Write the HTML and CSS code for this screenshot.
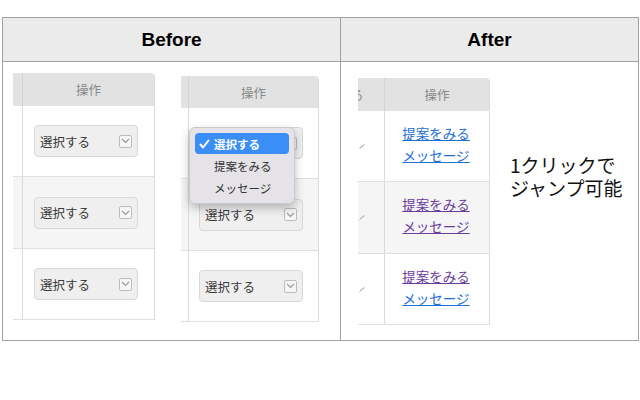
FILE: index.html
```html
<!DOCTYPE html>
<html lang="ja">
<head>
  <meta charset="UTF-8" />
  <title>Before / After</title>
  <link rel="stylesheet" href="styles.css">
</head>
<body>

<div class="compare">
  <div class="head left">Before</div>
  <div class="head">After</div>

  <div class="body left before">
    <!-- 変更前: セレクトボックス -->
    <div class="panel p1">
      <div class="row top"><div class="stub"></div><div class="main">操作</div></div>
      <div class="row"><div class="stub"></div><div class="main">
        <div class="select"><span>選択する</span><span class="arrow"><svg width="9" height="6" viewBox="0 0 9 6"><polyline points="1,1 4.5,4.5 8,1" fill="none" stroke="#9a9a9a" stroke-width="1.2"/></svg></span></div>
      </div></div>
      <div class="row alt"><div class="stub"></div><div class="main">
        <div class="select"><span>選択する</span><span class="arrow"><svg width="9" height="6" viewBox="0 0 9 6"><polyline points="1,1 4.5,4.5 8,1" fill="none" stroke="#9a9a9a" stroke-width="1.2"/></svg></span></div>
      </div></div>
      <div class="row"><div class="stub"></div><div class="main">
        <div class="select"><span>選択する</span><span class="arrow"><svg width="9" height="6" viewBox="0 0 9 6"><polyline points="1,1 4.5,4.5 8,1" fill="none" stroke="#9a9a9a" stroke-width="1.2"/></svg></span></div>
      </div></div>
    </div>

    <div class="panel p2">
      <div class="row top"><div class="stub"></div><div class="main">操作</div></div>
      <div class="row"><div class="stub"></div><div class="main">
        <div class="select"><span>選択する</span><span class="arrow"><svg width="9" height="6" viewBox="0 0 9 6"><polyline points="1,1 4.5,4.5 8,1" fill="none" stroke="#9a9a9a" stroke-width="1.2"/></svg></span></div>
      </div></div>
      <div class="row alt"><div class="stub"></div><div class="main">
        <div class="select"><span>選択する</span><span class="arrow"><svg width="9" height="6" viewBox="0 0 9 6"><polyline points="1,1 4.5,4.5 8,1" fill="none" stroke="#9a9a9a" stroke-width="1.2"/></svg></span></div>
      </div></div>
      <div class="row"><div class="stub"></div><div class="main">
        <div class="select"><span>選択する</span><span class="arrow"><svg width="9" height="6" viewBox="0 0 9 6"><polyline points="1,1 4.5,4.5 8,1" fill="none" stroke="#9a9a9a" stroke-width="1.2"/></svg></span></div>
      </div></div>

      <div class="menu">
        <div class="item active"><span class="mark"><svg width="11" height="10" viewBox="0 0 11 10"><polyline points="1.5,5.5 4,8.5 9.5,1.5" fill="none" stroke="#fff" stroke-width="2" stroke-linecap="round" stroke-linejoin="round"/></svg></span>選択する</div>
        <div class="item"><span class="mark"></span>提案をみる</div>
        <div class="item"><span class="mark"></span>メッセージ</div>
      </div>
    </div>
  </div>

  <div class="body after">
    <!-- 変更後: 直接リンク -->
    <div class="panel p3">
      <div class="row top"><div class="stub"><span class="cut">ろ</span></div><div class="main">操作</div></div>
      <div class="row"><div class="stub"><svg class="tick" width="6" height="5" viewBox="0 0 6 5"><line x1="0.5" y1="4.5" x2="5.5" y2="0.5" stroke="#9a9a9a" stroke-width="1"/></svg></div><div class="main links">
        <a href="#">提案をみる</a>
        <a href="#">メッセージ</a>
      </div></div>
      <div class="row alt"><div class="stub"><svg class="tick" width="6" height="5" viewBox="0 0 6 5"><line x1="0.5" y1="4.5" x2="5.5" y2="0.5" stroke="#9a9a9a" stroke-width="1"/></svg></div><div class="main links">
        <a href="#" class="visited">提案をみる</a>
        <a href="#" class="visited">メッセージ</a>
      </div></div>
      <div class="row"><div class="stub"><svg class="tick" width="6" height="5" viewBox="0 0 6 5"><line x1="0.5" y1="4.5" x2="5.5" y2="0.5" stroke="#9a9a9a" stroke-width="1"/></svg></div><div class="main links">
        <a href="#" class="visited">提案をみる</a>
        <a href="#">メッセージ</a>
      </div></div>
    </div>

    <p class="note">1クリックで<br>ジャンプ可能</p>
  </div>
</div>

</body>
</html>
```

FILE: styles.css
```css
body {
  margin: 0;
  background: #fff;
  font-family: "Noto Sans CJK JP", "Noto Sans", sans-serif;
  color: #333;
}
.compare {
  display: grid;
  grid-template-columns: 338px 297px;
  margin: 17px 0 0 2px;
  width: 637px;
  box-sizing: border-box;
  border: 1px solid #a2a2a2;
}
.head {
  height: 44px;
  box-sizing: border-box;
  border-bottom: 1px solid #a2a2a2;
  background: #ebebeb;
  display: flex;
  align-items: center;
  justify-content: center;
  font-family: "Liberation Sans", Arial, sans-serif;
  font-weight: bold;
  font-size: 19px;
  color: #000;
}
.left {
  border-right: 1px solid #a2a2a2;
}
.body {
  height: 278px;
  box-sizing: border-box;
  display: flex;
  align-items: flex-start;
}
.before {
  padding: 11px 0 0 10px;
  gap: 26px;
}
.after {
  padding: 16px 0 0 17px;
  gap: 20px;
}

/* スクリーンショット風の小さな表 */
.panel {
  position: relative;
  box-sizing: border-box;
  border-right: 1px solid #dcdcdc;
  border-top-right-radius: 4px;
  background: #fff;
}
.p1 { width: 142px; }
.p2 { width: 138px; margin-top: 3px; }
.p3 { width: 132px; }
.row {
  display: flex;
  height: 71px;
  border-bottom: 1px solid #e0e0e0;
  box-sizing: border-box;
}
.row.alt {
  height: 72px;
  background: #f5f5f5;
}
.row.top {
  height: 33px;
  background: #e2e2e2;
  border-bottom: none;
  border-top-right-radius: 4px;
}
.p2 .row.top { height: 32px; }
.stub {
  overflow: hidden;
  display: flex;
  align-items: center;
}
.p1 .stub { width: 9px; }
.p2 .stub { width: 7px; }
.p3 .stub { width: 26px; }
.main {
  flex: 1;
  border-left: 1px solid #dadada;
  display: flex;
  align-items: center;
  padding-left: 11px;
}
.p2 .main { padding-left: 10px; }
.top .main {
  justify-content: center;
  padding-left: 0;
  font-size: 12.5px;
  color: #888;
  border-left-color: #d4d4d4;
}
.p2 .top .main { padding-left: 0; }
.cut {
  margin-left: -7px;
  font-size: 12.5px;
  color: #8a8a8a;
}
.tick { margin-left: 1px; }

.select {
  width: 104px;
  height: 32px;
  box-sizing: border-box;
  display: flex;
  align-items: center;
  padding: 0 5px;
  border: 1px solid #d8d8d8;
  border-radius: 4px;
  background: #efefef;
  font-size: 12.5px;
  color: #3a3a3a;
}
.arrow {
  margin-left: auto;
  width: 13px;
  height: 13px;
  box-sizing: border-box;
  border: 1px solid #bcbcbc;
  border-radius: 2px;
  background: #f6f6f6;
  display: flex;
  align-items: center;
  justify-content: center;
}

/* 開いたプルダウン */
.menu {
  position: absolute;
  left: 8px;
  top: 51px;
  width: 106px;
  height: 77px;
  box-sizing: border-box;
  padding: 5px 5px 0;
  border: 1px solid #cbc9ce;
  border-radius: 6px;
  background: #e5e3e8;
  box-shadow: 0 4px 10px rgba(0,0,0,0.25);
}
.item {
  display: flex;
  align-items: center;
  height: 22px;
  padding-left: 4px;
  border-radius: 4px;
  font-size: 11.5px;
  color: #333;
}
.item.active {
  height: 21px;
  margin-bottom: 1px;
  background: #3a8ef5;
  color: #fff;
  font-weight: bold;
}
.mark {
  width: 15px;
  display: flex;
  align-items: center;
}

.links {
  flex-direction: column;
  justify-content: center;
  padding: 0 0 5px;
}
.links a {
  font-size: 13.5px;
  line-height: 22px;
  color: #1d6fd3;
  text-decoration: underline;
  margin-left: -2px;
}
.links a.visited {
  color: #6a3d9c;
}

.note {
  margin: 75px 0 0;
  font-size: 19px;
  line-height: 23px;
  color: #111;
}
```
